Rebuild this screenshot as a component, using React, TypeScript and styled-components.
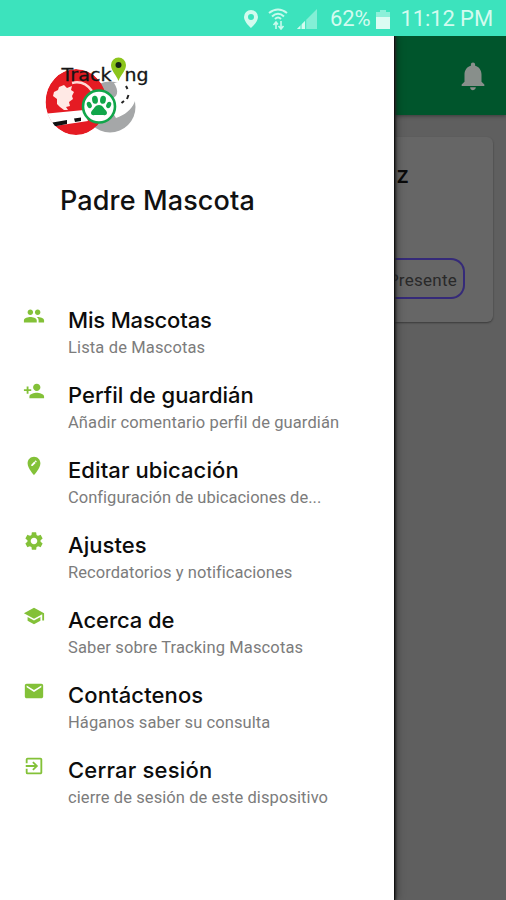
import React from 'react';
import styled, { createGlobalStyle } from 'styled-components';
import type { IconType } from 'react-icons';
import {
  MdEditLocation, MdEmail, MdExitToApp, MdNotifications, MdPeople, MdPersonAdd, MdSchool, MdSettings,
} from 'react-icons/md';

const GlobalStyle = createGlobalStyle`
  * { box-sizing: border-box; }
  body { margin: 0; background: #5f5f5f; }
`;

const Screen = styled.div`
  position: relative;
  display: flex;
  flex-direction: column;
  width: 506px;
  height: 900px;
  overflow: hidden;
  background: #5f5f5f;
  font-family: Roboto, sans-serif;
`;

const StatusBar = styled.header`
  position: relative;
  z-index: 2;
  display: flex;
  align-items: center;
  justify-content: flex-end;
  flex: none;
  height: 36px;
  padding: 2px 13px 0 0;
  background: #3ce3bd;
  color: #d3fbef;
  font-size: 22px;
  line-height: 34px;
  white-space: nowrap;
  svg { display: block; flex: none; }
`;

const StatusIcons = styled.div`
  display: flex;
  align-items: center;
  gap: 8px;
  margin-right: 13px;
`;

const Percent = styled.span`
  letter-spacing: -0.1px;
  margin-right: 6px;
`;

const Clock = styled.span`
  margin-left: 10px;
  letter-spacing: -0.1px;
`;

const AppBar = styled.div`
  display: flex;
  align-items: center;
  justify-content: flex-end;
  flex: none;
  height: 79px;
  padding-right: 16px;
  background: #00552c;
  color: #888f8b;
  box-shadow: 0 1px 4px rgba(0, 0, 0, 0.4);
`;

const Card = styled.section`
  display: flex;
  flex-direction: column;
  align-items: flex-start;
  justify-content: space-between;
  width: 480px;
  height: 185px;
  margin: 22px 0 0 13px;
  padding: 23px 28px 23px 371px;
  border-radius: 6px;
  background: #666;
  box-shadow: 0 1px 2px rgba(0, 0, 0, 0.4);
`;

const CardTitle = styled.div`
  width: 25px;
  display: flex;
  justify-content: flex-end;
  color: #0a0a0a;
  font: 500 23px/30px Inter, sans-serif;
`;

const Chip = styled.div`
  display: flex;
  align-items: center;
  justify-content: flex-end;
  width: 81px;
  height: 41px;
  padding: 2px 6px 0 0;
  border: 2px solid #352a79;
  border-left: 0;
  border-radius: 0 14px 14px 0;
  color: #292929;
  font-size: 17px;
  letter-spacing: 0.25px;
`;

const Drawer = styled.aside`
  position: absolute;
  top: 36px;
  bottom: 0;
  left: 0;
  width: 394px;
  padding: 20px 0 0;
  background: #fff;
  box-shadow: 1px 0 0 #111, 2px 0 2px #222, 3px 0 8px rgba(0, 0, 0, 0.35);
`;

const Logo = styled.svg`
  display: block;
  width: 110px;
  height: 84px;
  margin-left: 42px;
`;

const UserName = styled.h1`
  margin: 41px 0 0 60px;
  color: #111;
  font: 500 27px/40px Inter, sans-serif;
  letter-spacing: 0.12px;
  white-space: nowrap;
`;

const Menu = styled.nav`
  margin-top: 84px;
`;

const MenuItem = styled.div`
  display: grid;
  grid-template-columns: 45px 1fr;
  height: 75px;
  padding-left: 23px;
`;

const MenuIcon = styled.div`
  color: #83c138;
  svg { display: block; }
`;

const ItemTitle = styled.div<{ $spacing: number }>`
  color: #0c0c0c;
  font: 500 22px/30px Inter, sans-serif;
  letter-spacing: ${({ $spacing }) => $spacing}px;
  white-space: nowrap;
`;

const ItemText = styled.div<{ $spacing: number }>`
  color: #7c7c7c;
  font-size: 16.5px;
  line-height: 25px;
  letter-spacing: ${({ $spacing }) => $spacing}px;
  white-space: nowrap;
`;

interface Entry { icon: IconType; title: string; text: string; ts: number; ds: number }

const entries: Entry[] = [
  { icon: MdPeople, title: 'Mis Mascotas', text: 'Lista de Mascotas', ts: -0.17, ds: 0.14 },
  { icon: MdPersonAdd, title: 'Perfil de guardián', text: 'Añadir comentario perfil de guardián', ts: 0, ds: 0.1 },
  { icon: MdEditLocation, title: 'Editar ubicación', text: 'Configuración de ubicaciones de...', ts: 0.08, ds: 0.02 },
  { icon: MdSettings, title: 'Ajustes', text: 'Recordatorios y notificaciones', ts: 0.05, ds: 0.06 },
  { icon: MdSchool, title: 'Acerca de', text: 'Saber sobre Tracking Mascotas', ts: -0.05, ds: 0.13 },
  { icon: MdEmail, title: 'Contáctenos', text: 'Háganos saber su consulta', ts: 0.12, ds: 0.09 },
  { icon: MdExitToApp, title: 'Cerrar sesión', text: 'cierre de sesión de este dispositivo', ts: 0.2, ds: 0.08 },
];

const TrackingLogo = () => (
  <Logo viewBox="42 56 110 84">
    <clipPath id="globe"><ellipse cx="76" cy="102" rx="30.500" ry="33" /></clipPath>
    <circle cx="110" cy="107" r="25.500" fill="#a5a7a8" />
    <path d="M104 98C118 101 120 92 114 83L131 80C142 96 134 112 116 118Z" fill="#fff" />
    <path d="M126 86L127.500 89M128.500 95L127 99M124 101L121.500 103" stroke="#222" strokeWidth="2" />
    <g clipPath="url(#globe)">
      <ellipse cx="76" cy="102" rx="30.500" ry="33" fill="#e51b23" />
      <path d="M42 114L84 110L88 121L42 128Z" fill="#fff" />
      <path d="M52.500 122.500L67 120V124L54 126.500ZM74 118.500L81 117.500V121L75 122Z" fill="#111" />
      <path d="M54 92L58 90L59 87L64 85L67 88L72 86L71 90L74 92L72 96L73 99L69 102L70 106L66 107L68 110L64 110L60 107L57 104L57 99L53 96Z" fill="#ffe9e5" />
      <path d="M72 83C80 81 87 84 92 91" stroke="#ffd9d5" strokeWidth="2.500" fill="none" />
    </g>
    <circle cx="99" cy="106.500" r="16" fill="#fff" stroke="#11a64a" strokeWidth="2.600" />
    <g fill="#11a64a">
      <ellipse cx="95" cy="99.800" rx="2.900" ry="4" transform="rotate(-8 95 99.800)" />
      <ellipse cx="103" cy="99.800" rx="2.900" ry="4" transform="rotate(8 103 99.800)" />
      <ellipse cx="89.300" cy="105" rx="2.300" ry="3.300" transform="rotate(-25 89.300 105)" />
      <ellipse cx="108.700" cy="105" rx="2.300" ry="3.300" transform="rotate(25 108.700 105)" />
      <path d="M99 105C102.500 105 103.500 108 105.500 110C108.500 113 106.500 116 103.500 115H94.500C91.500 116 89.500 113 92.500 110C94.500 108 95.500 105 99 105Z" />
    </g>
    <g fill="#151515" stroke="#151515" strokeWidth="0.300" fontFamily="DejaVu Sans, sans-serif" fontSize="17.500">
      <text x="61.500" y="81" textLength="50" lengthAdjust="spacingAndGlyphs">Track</text>
      <text x="124.500" y="81" textLength="24" lengthAdjust="spacingAndGlyphs">ng</text>
    </g>
    <path d="M118.500 81C116 74 111 71 111 65A7.500 7.500 0 0 1 126 65C126 71 121 74 118.500 81Z" fill="#8cc51c" />
    <circle cx="118.500" cy="65" r="3" fill="#152315" />
  </Logo>
);

const App = () => (
  <Screen>
    <GlobalStyle />
    <StatusBar>
      <StatusIcons>
        <svg width="16" height="20" viewBox="0 0 16 20">
          <path fillRule="evenodd" fill="#d3fbef" d="M8 1a7 7 0 0 0-7 7c0 5 7 11 7 11s7-6 7-11a7 7 0 0 0-7-7zm0 4a3 3 0 1 1 0 6a3 3 0 0 1 0-6z" />
        </svg>
        <svg width="22" height="22" viewBox="0 0 22 22" fill="none" stroke="#c9faed" strokeWidth="2">
          <path d="M2 5Q11-2 20 5M5 8.500Q11 3 17 8.500M8 11Q11 8 14 11" />
          <path d="M9 21V15M6.500 17L9 14L11 16.500M14 13V20M11.500 18L14 21L16.500 18" strokeWidth="1.600" />
        </svg>
        <svg width="20" height="20" viewBox="0 0 20 20">
          <path d="M0 20L20 0V20Z" fill="#83efd6" />
          <path d="M0 20L8 12V20Z" fill="#d3fbef" />
          <path d="M4 15V20M8.700 11V20" stroke="#3ce3bd" />
        </svg>
      </StatusIcons>
      <Percent>62%</Percent>
      <svg width="14" height="19" viewBox="0 0 14 19">
        <path d="M4 0H10V2H14V8H0V2H4Z" fill="#8df0d9" />
        <path d="M0 7H14V19H0Z" fill="#dcfcf3" />
      </svg>
      <Clock>11:12 PM</Clock>
    </StatusBar>
    <AppBar><MdNotifications size={34} /></AppBar>
    <Card>
      <CardTitle>z</CardTitle>
      <Chip>Presente</Chip>
    </Card>
    <Drawer>
      <TrackingLogo />
      <UserName>Padre Mascota</UserName>
      <Menu>
        {entries.map(({ icon: Icon, title, text, ts, ds }) => (
          <MenuItem key={title}>
            <MenuIcon><Icon size={22} /></MenuIcon>
            <div>
              <ItemTitle $spacing={ts}>{title}</ItemTitle>
              <ItemText $spacing={ds}>{text}</ItemText>
            </div>
          </MenuItem>
        ))}
      </Menu>
    </Drawer>
  </Screen>
);

export default App;
